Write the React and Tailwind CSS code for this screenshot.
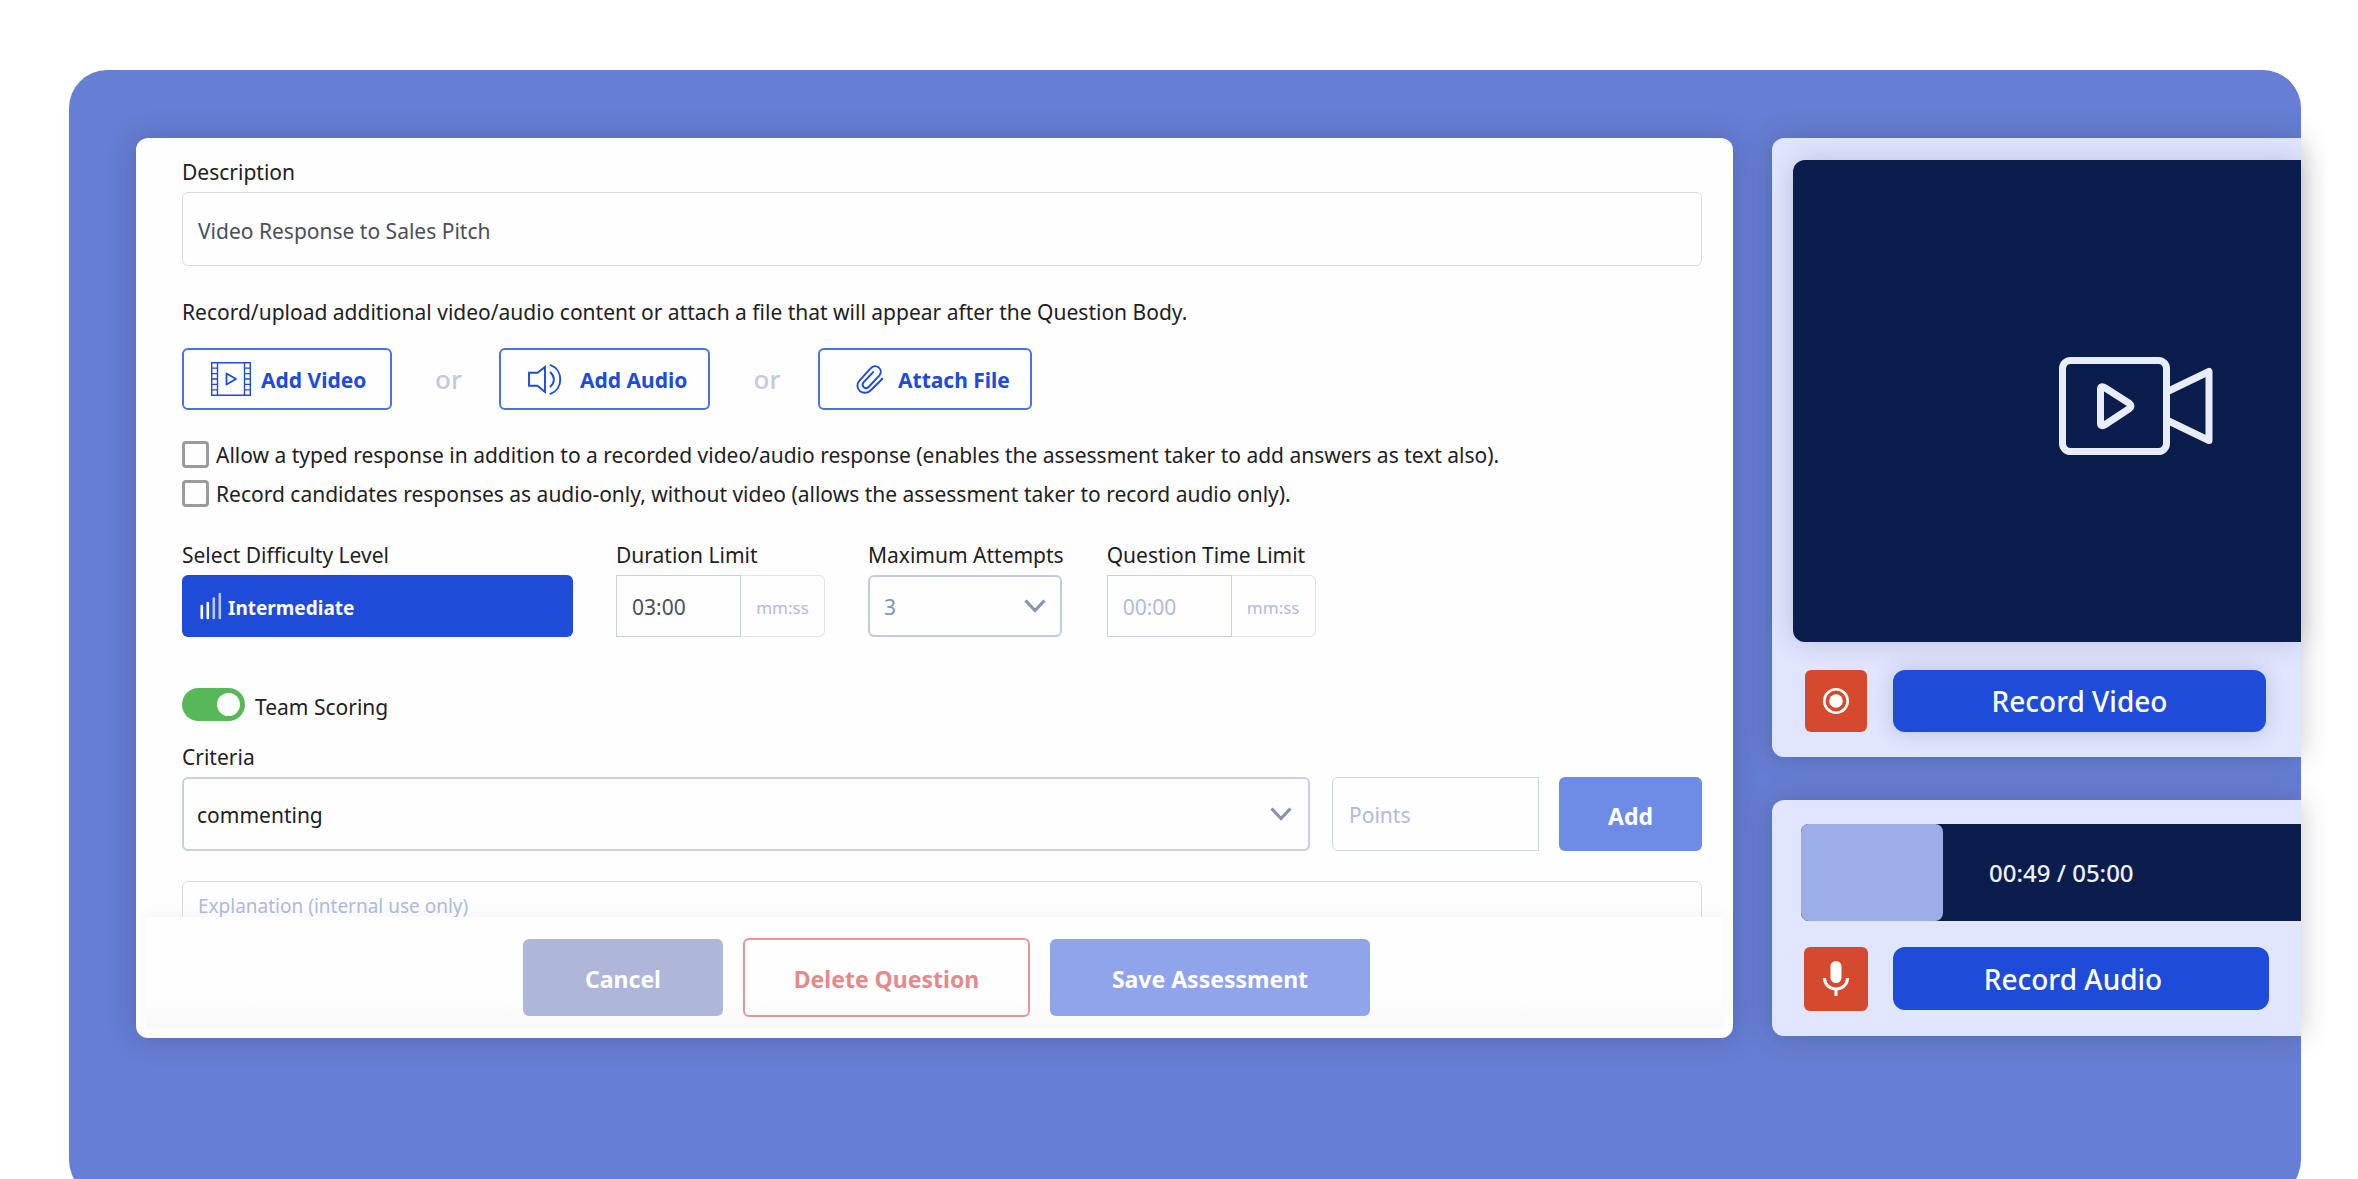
import { useState } from 'react';

const RESPONSE_OPTIONS = [
  {
    id: 'typed',
    label:
      'Allow a typed response in addition to a recorded video/audio response (enables the assessment taker to add answers as text also).',
  },
  {
    id: 'audio-only',
    label:
      'Record candidates responses as audio-only, without video (allows the assessment taker to record audio only).',
  },
];

function FilmIcon() {
  return (
    <svg width="40" height="34" viewBox="0 0 40 34" fill="none" stroke="currentColor" strokeWidth="1.4">
      <path d="M.7.7h38.6v32.6H.7zM6.5.7v32.6M33.5.7v32.6" />
      <path d="M.7 6.1h5.8M.7 11.6h5.8M.7 17h5.8M.7 22.4h5.8M.7 27.9h5.8M33.5 6.1h5.8M33.5 11.6h5.8M33.5 17h5.8M33.5 22.4h5.8M33.5 27.9h5.8" />
      <path d="M15.5 11.5v11l9.5-5.5z" strokeWidth="1.8" strokeLinejoin="round" />
    </svg>
  );
}

function SpeakerIcon() {
  return (
    <svg width="34" height="31" viewBox="0 0 34 31" fill="none" stroke="currentColor" strokeWidth="1.9">
      <path d="M1 8.8h8.5L17 3v25l-7.5-6.2H1z" />
      <path d="M22.5 8.5c4.5 4 4.5 10 0 14" strokeLinecap="round" />
      <path d="M22.5 1.2c13 4.5 13 24 0 28.6" strokeLinecap="round" />
    </svg>
  );
}

function ClipIcon() {
  return (
    <svg
      width="28"
      height="29"
      viewBox="0 0 28 30"
      fill="none"
      stroke="currentColor"
      strokeWidth="2"
      strokeLinecap="round"
      strokeLinejoin="round"
    >
      <path d="M26.8 14.2 14.6 26.4c-3 3-7.6 3.1-10.9.7-3.3-2.8-3.6-7.4-.8-10.6L14.6 3.4c2.4-2.6 6-2.8 8.5-.7 2.5 2.2 2.7 5.6.5 8.2L12.8 22.5c-1.5 1.6-3.7 1.7-5.2.5-1.5-1.4-1.6-3.4-.3-5l9.9-10.7" />
    </svg>
  );
}

function LevelIcon() {
  return (
    <svg width="22" height="28" viewBox="0 0 22 28" fill="none" strokeWidth="2.6" strokeLinecap="round">
      <path d="M1.8 14v12M7.8 11v15" stroke="#fff" />
      <path d="M13.8 6.5V26M19.8 2v24" stroke="#b9c3e8" />
    </svg>
  );
}

function Chevron() {
  return (
    <svg
      className="pointer-events-none absolute right-[18px] top-1/2 -translate-y-1/2 text-[#8494b4]"
      width="22"
      height="14"
      viewBox="0 0 22 14"
      fill="none"
      stroke="currentColor"
      strokeWidth="3.2"
    >
      <path d="m1.5 1.500 9.500 10 9.500-10" />
    </svg>
  );
}

function CameraIcon() {
  return (
    <svg width="154" height="98" viewBox="0 0 154 98" fill="none" stroke="#e8edfb" strokeWidth="7" strokeLinejoin="round">
      <rect x="3.5" y="3.5" width="104" height="91" rx="8" />
      <path d="M107.5 35 150 14.500v69L107.500 63" />
      <path d="M41.5 32c0-2.500 2-3 4-1.500l25 16c2 1.500 2 3.500 0 5l-25 16.500c-2 1.500-4 .5-4-1.500z" />
    </svg>
  );
}

function RecordIcon() {
  return (
    <svg width="28" height="28" viewBox="0 0 28 28" fill="none">
      <circle cx="14" cy="14" r="11.7" stroke="#fff" strokeWidth="2.6" />
      <circle cx="14" cy="14" r="6.8" fill="#fff" />
    </svg>
  );
}

function MicIcon() {
  return (
    <svg width="28" height="36" viewBox="0 0 28 36" fill="none">
      <rect x="8.5" y="0" width="11" height="22" rx="5.5" fill="#fff" />
      <path d="M2.500 17c0 6.500 5 11 11.500 11s11.500-4.500 11.500-11M14 28v7" stroke="#fff" strokeWidth="3" />
    </svg>
  );
}

function TimeField({ id, label, value, onChange, placeholder }) {
  return (
    <div>
      <label className="block mb-1.5 leading-7" htmlFor={id}>
        {label}
      </label>
      <div className="flex h-[62px]">
        <input
          className="w-[125px] border border-[#c8cfe3] px-[15px] pt-1 text-[#4a4f5a] placeholder:text-[#b0badd] outline-none"
          id={id}
          type="text"
          placeholder={placeholder}
          value={value}
          onChange={(e) => onChange(e.target.value)}
        />
        <span className="w-[84px] border border-l-0 border-[#dfe3ee] rounded-r-md flex items-center justify-center pt-1 text-[17px] text-[#b0badd]">
          mm:ss
        </span>
      </div>
    </div>
  );
}

function QuestionForm() {
  const [description, setDescription] = useState('Video Response to Sales Pitch');
  const [duration, setDuration] = useState('03:00');
  const [timeLimit, setTimeLimit] = useState('');
  const [attempts, setAttempts] = useState('3');
  const [teamScoring, setTeamScoring] = useState(true);

  return (
    <form
      className="flex-1 min-w-0 rounded-xl bg-[#fefefe] pb-2.5 shadow-[0_0_28px_rgba(40,50,110,0.3)]"
      onSubmit={(e) => e.preventDefault()}
    >
      <div className="pt-5 pl-[46px] pr-[31px]">
        {/* Description */}
        <label className="block mb-1.5 leading-7" htmlFor="description">
          Description
        </label>
        <input
          className="block w-full h-[74px] border border-[#d5dbe9] rounded-md px-[15px] pt-1 text-[#4a4f5a] outline-none"
          id="description"
          type="text"
          value={description}
          onChange={(e) => setDescription(e.target.value)}
        />

        {/* Attachments */}
        <p className="mt-8 leading-7">
          Record/upload additional video/audio content or attach a file that will appear after the Question Body.
        </p>
        <div className="mt-[22px] flex items-center text-[#1e4bd8] font-bold">
          <button className="w-[210px] h-[62px] border-2 border-[#4a72e3] rounded-md flex items-center gap-2.5 pl-[27px]" type="button">
            <FilmIcon />
            <span className="pt-1">Add Video</span>
          </button>
          <span className="w-[107px] pl-1.5 text-center text-[26px] font-medium text-[#c3cade]">or</span>
          <button className="w-[211px] h-[62px] border-2 border-[#4a72e3] rounded-md flex items-center gap-[18px] pl-[27px]" type="button">
            <SpeakerIcon />
            <span className="pt-1">Add Audio</span>
          </button>
          <span className="w-[108px] pl-1.5 text-center text-[26px] font-medium text-[#c3cade]">or</span>
          <button className="w-[214px] h-[62px] border-2 border-[#4a72e3] rounded-md flex items-center gap-3.5 pl-9" type="button">
            <ClipIcon />
            <span className="pt-1">Attach File</span>
          </button>
        </div>

        {/* Response options */}
        <div className="mt-[31px] flex flex-col gap-[13px]">
          {RESPONSE_OPTIONS.map((option) => (
            <label key={option.id} className="h-[26px] flex items-center gap-[7px] whitespace-nowrap">
              <input
                className="appearance-none size-[27px] shrink-0 border-3 border-[#9b9b9b] rounded-sm checked:bg-[#1e4bd8]"
                type="checkbox"
              />
              <span className="pt-1">{option.label}</span>
            </label>
          ))}
        </div>

        {/* Limits */}
        <div className="mt-[35px] flex gap-[43px]">
          <div>
            <span className="block mb-1.5 leading-7" id="difficulty-label">
              Select Difficulty Level
            </span>
            <button
              className="w-[391px] h-[62px] rounded-md bg-[#1e4bd8] text-white text-[19px] font-bold flex items-center gap-1.5 pl-[18px]"
              type="button"
              aria-describedby="difficulty-label"
            >
              <LevelIcon />
              <span className="pt-1">Intermediate</span>
            </button>
          </div>
          <TimeField id="duration" label="Duration Limit" value={duration} onChange={setDuration} />
          <div>
            <label className="block mb-1.5 leading-7" htmlFor="attempts">
              Maximum Attempts
            </label>
            <div className="relative">
              <select
                className="appearance-none w-[194px] h-[62px] border-2 border-[#c3cbe3] rounded-md px-3.5 pt-1 text-[#8494b4] outline-none"
                id="attempts"
                value={attempts}
                onChange={(e) => setAttempts(e.target.value)}
              >
                <option>1</option>
                <option>2</option>
                <option>3</option>
              </select>
              <Chevron />
            </div>
          </div>
          <TimeField
            id="time-limit"
            label="Question Time Limit"
            placeholder="00:00"
            value={timeLimit}
            onChange={setTimeLimit}
          />
        </div>

        {/* Scoring */}
        <label className="mt-[51px] w-fit flex items-center gap-2.5">
          <input
            className="appearance-none w-[63px] h-[33px] rounded-full bg-[#b0badd] checked:bg-[#57b858] p-[5px] before:block before:size-[23px] before:rounded-full before:bg-white checked:before:ml-[30px]"
            type="checkbox"
            role="switch"
            checked={teamScoring}
            onChange={(e) => setTeamScoring(e.target.checked)}
          />
          <span className="h-8 pt-1 leading-7">Team Scoring</span>
        </label>

        <label className="block mt-[22px] mb-1.5 leading-7" htmlFor="criteria">
          Criteria
        </label>
        <div className="flex h-[74px]">
          <div className="relative flex-1">
            <select
              className="appearance-none size-full border-2 border-[#c8cfe2] rounded-md px-[13px] pt-1 outline-none"
              id="criteria"
            >
              <option>commenting</option>
            </select>
            <Chevron />
          </div>
          <input
            className="w-[207px] ml-[22px] border border-[#cdd4e6] rounded-l-md px-4 pt-1 placeholder:text-[#b0badd] outline-none"
            type="text"
            placeholder="Points"
            aria-label="Points"
          />
          <button className="w-[143px] ml-5 rounded-md bg-[#6e8be5] pt-1 text-white text-[23px] font-bold" type="button">
            Add
          </button>
        </div>

        {/* The explanation box runs on under the action bar */}
        <div className="mt-[30px] h-9 overflow-hidden">
          <textarea
            className="block w-full h-[74px] border border-[#d5dbe9] rounded-md px-[15px] py-2.5 text-[19px] placeholder:text-[#b0badd] resize-none outline-none"
            placeholder="Explanation (internal use only)"
            aria-label="Explanation"
          />
        </div>
      </div>

      {/* Actions */}
      <div className="relative mx-2.5 h-[111px] pt-2.5 pl-6 flex items-center justify-center gap-5 text-[23px] font-bold bg-linear-to-b from-[#fefefe] from-70% to-[#f9f9fa] shadow-[0_-6px_14px_rgba(0,0,0,0.03)]">
        <button className="w-[200px] h-[77px] rounded-md bg-[#aeb6da] pt-1 text-white" type="button">
          Cancel
        </button>
        <button className="w-[287px] h-[79px] rounded-md border-2 border-[#e79595] pt-1 text-[#e48a8a]" type="button">
          Delete Question
        </button>
        <button className="w-[320px] h-[77px] rounded-md bg-[#8fa4eb] pt-1 text-white" type="submit">
          Save Assessment
        </button>
      </div>
    </form>
  );
}

function Recorder() {
  return (
    <aside className="w-[529px] shrink-0 flex flex-col gap-[43px]">
      {/* Video */}
      <section className="rounded-l-xl bg-[#e1e6ff] pt-[22px] pb-[25px] shadow-[0_0_28px_rgba(40,40,60,0.25)]">
        <div className="ml-[21px] h-[482px] rounded-l-xl bg-[#0b1d4d] flex items-center justify-center pt-2.5 pl-[178px] shadow-[0_0_28px_rgba(40,40,60,0.2)]">
          <CameraIcon />
        </div>
        <div className="mt-7 pl-[33px] pr-[35px] flex gap-[26px]">
          <button
            className="size-[62px] rounded-md bg-[#d5492e] flex items-center justify-center"
            type="button"
            aria-label="Video recording"
          >
            <RecordIcon />
          </button>
          <button
            className="flex-1 h-[62px] rounded-xl bg-[#1e4bd8] text-white text-[28px] font-medium shadow-[0_0_22px_rgba(40,40,60,0.2)]"
            type="button"
          >
            Record Video
          </button>
        </div>
      </section>

      {/* Audio */}
      <section className="rounded-l-xl bg-[#e1e6ff] pt-6 pb-[25px] shadow-[0_0_28px_rgba(40,40,60,0.25)]">
        <div className="ml-[29px] h-[97px] rounded-l-lg bg-[#0b1d4d] flex items-center">
          <div className="w-[142px] h-full rounded-lg bg-[#9dade8]" />
          <span className="ml-[46px] text-[24px] font-medium text-[#eef2ff]">00:49 / 05:00</span>
        </div>
        <div className="mt-[26px] pl-8 pr-8 flex gap-[25px]">
          <button
            className="size-16 rounded-md bg-[#d5492e] flex items-center justify-center"
            type="button"
            aria-label="Audio recording"
          >
            <MicIcon />
          </button>
          <button className="flex-1 h-[63px] rounded-xl bg-[#1e4bd8] pr-4 text-white text-[28px] font-medium" type="button">
            Record Audio
          </button>
        </div>
      </section>
    </aside>
  );
}

export default function App() {
  return (
    <main className="h-screen overflow-hidden bg-white pt-[70px] pl-[69px] pr-[57px] font-['Noto_Sans',sans-serif] text-[21px] text-[#1f2022]">
      <div className="flex items-start gap-[39px] rounded-[38px] bg-[#667ed3] pt-[68px] pb-40 pl-[67px]">
        <QuestionForm />
        <Recorder />
      </div>
    </main>
  );
}
